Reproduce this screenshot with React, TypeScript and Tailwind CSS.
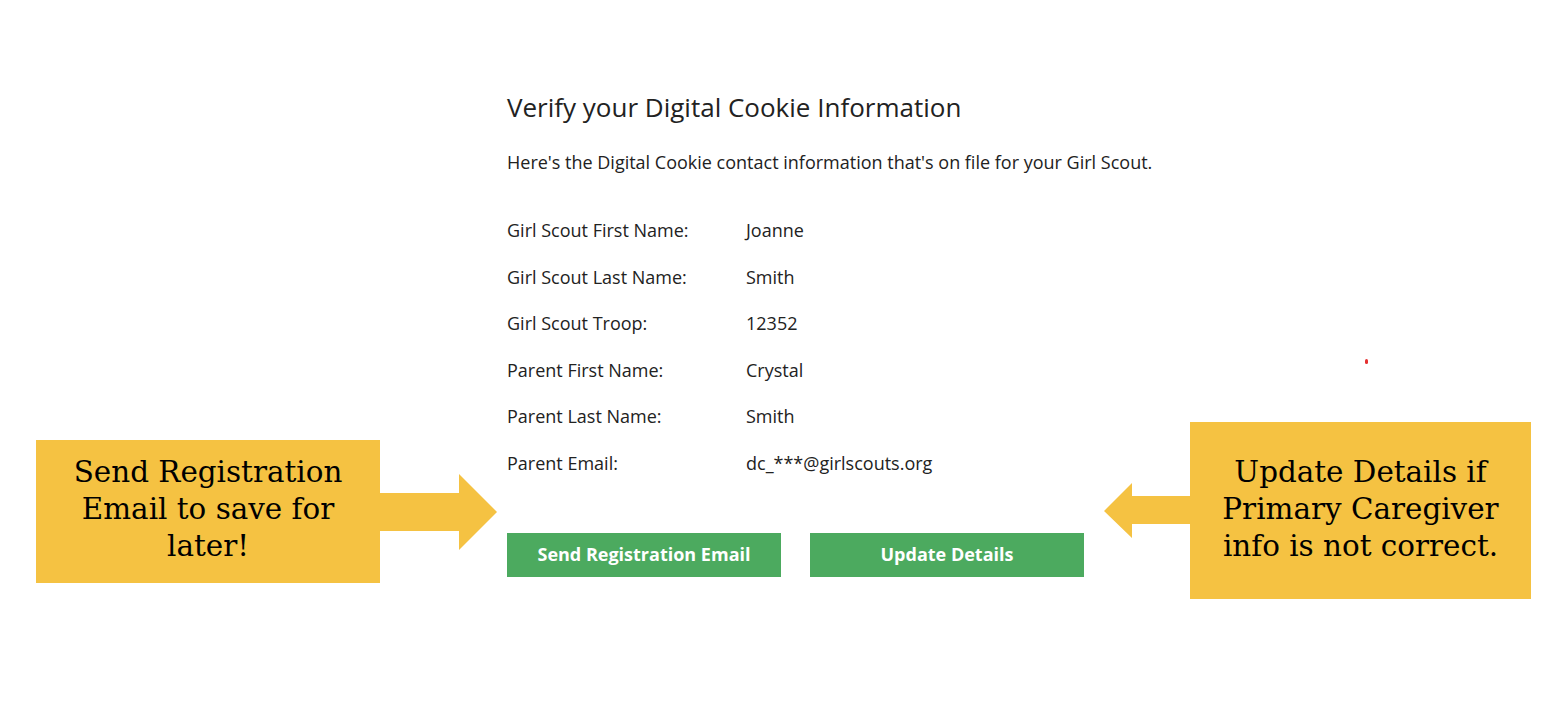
const rows: [string, string][] = [
  ["Girl Scout First Name:", "Joanne"],
  ["Girl Scout Last Name:", "Smith"],
  ["Girl Scout Troop:", "12352"],
  ["Parent First Name:", "Crystal"],
  ["Parent Last Name:", "Smith"],
  ["Parent Email:", "dc_***@girlscouts.org"],
];

const callout = "font-['DejaVu_Serif',serif] text-[29.4px] leading-[37px] text-black text-center";

export default function App() {
  return (
    <div className="relative h-[724px] w-[1564px] overflow-hidden bg-white font-['Open_Sans',sans-serif] text-[#222]">
      <main className="pl-[507px] pt-[89px]">
        <h1 className="text-[26px] leading-[36px]">Verify your Digital Cookie Information</h1>
        <p className="mt-[25px] text-[18px] leading-[24px]">
          Here's the Digital Cookie contact information that's on file for your Girl Scout.
        </p>

        <dl className="mt-[44px] grid grid-cols-[239px_auto] gap-y-[22.6px] text-[18px] leading-[24px]">
          {rows.map(([label, value]) => (
            <div key={label} className="contents">
              <dt>{label}</dt>
              <dd>{value}</dd>
            </div>
          ))}
        </dl>

        <div className="mt-[58px] flex gap-[29px]">
          <button className="h-[44px] w-[274px] bg-[#4caa5f] text-[18px] font-bold text-white">
            Send Registration Email
          </button>
          <button className="h-[44px] w-[274px] bg-[#4caa5f] text-[18px] font-bold text-white">
            Update Details
          </button>
        </div>
      </main>

      {/* left annotation */}
      <div className="absolute left-[36px] top-[440px] flex items-center">
        <div className={`flex h-[143px] w-[344px] items-center justify-center bg-[#f5c242] pb-[4px] ${callout}`}>
          <p>
            Send Registration
            <br />
            Email to save for
            <br />
            later!
          </p>
        </div>
        <svg width="118" height="76" viewBox="0 0 118 76" className="-ml-px">
          <path d="M0 19 H80 V0 L118 38 L80 76 V57 H0 Z" fill="#f5c242" />
        </svg>
      </div>

      {/* right annotation */}
      <div className="absolute left-[1104px] top-[422px] flex items-center">
        <svg width="87" height="55" viewBox="0 0 87 55" className="-mr-px">
          <path d="M0 28 L28 0 V13 H87 V41 H28 V55 Z" fill="#f5c242" />
        </svg>
        <div className={`flex h-[177px] w-[341px] items-center justify-center bg-[#f5c242] pb-[2px] ${callout}`}>
          <p>
            Update Details if
            <br />
            Primary Caregiver
            <br />
            info is not correct.
          </p>
        </div>
      </div>

      <span className="absolute left-[1365px] top-[359px] h-[5px] w-[3px] rounded-full bg-[#e53030]" />
    </div>
  );
}
